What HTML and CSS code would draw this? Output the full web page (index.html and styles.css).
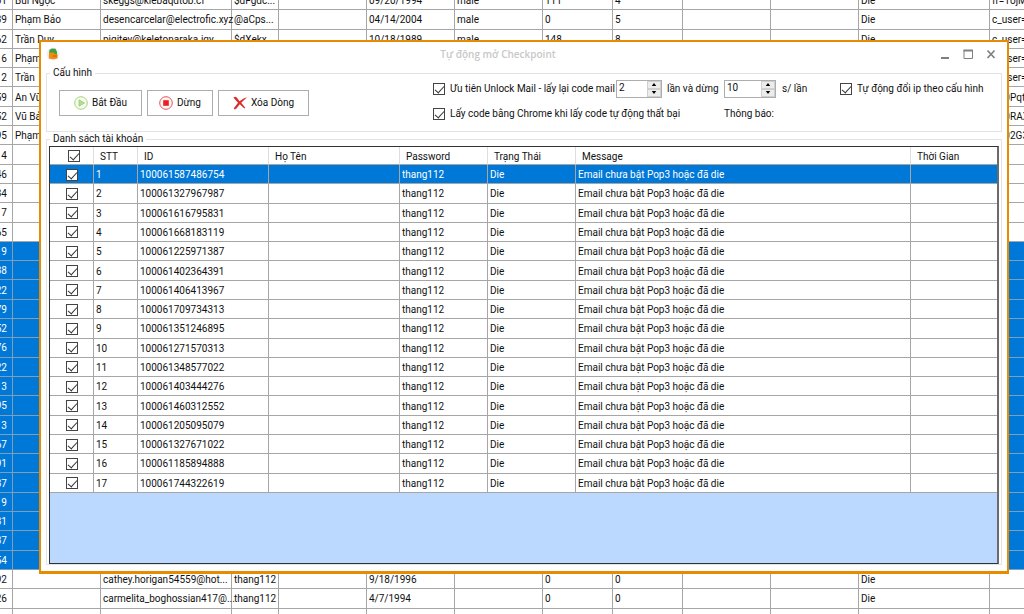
FILE: index.html
```html
<!DOCTYPE html>
<html lang="vi">
<head>
<meta charset="utf-8">
<title>Tự động mở Checkpoint</title>
<link rel="stylesheet" href="styles.css">
</head>
<body>
<div class="backdrop">
  <table class="sheet" id="sheet">
    <colgroup><col class="b-uid"><col class="b-name"><col class="b-mail"><col class="b-pass"><col class="b-col"><col class="b-col"><col class="b-col"><col class="b-num"><col class="b-num"><col class="b-col"><col class="b-col"><col class="b-state"><col></colgroup>
    <tbody></tbody>
  </table>
</div>
<main class="window">
  <header class="titlebar">
    <svg class="app-icon" viewBox="0 0 14 14"><circle cx="7" cy="7" r="6.5" fill="#edf1f2"/><path d="M3 6 3.5 2.8 6 1.5 9.5 1.8 11 5V7H3z" fill="#3fa142"/><path d="M3 5.5h4.5L9 7h2.5v4.5L7 12.3 2.8 11.500z" fill="#f28c0f"/><path d="M7 8h4v2H7z" fill="#d9760b"/></svg>
    <h1 class="title">Tự động mở Checkpoint</h1>
    <div class="win-buttons">
      <button class="win-button" aria-label="Thu nhỏ"><svg viewBox="0 0 12 12"><path d="M2 10h8" stroke="#808080" stroke-width="2"/></svg></button>
      <button class="win-button" aria-label="Phóng to"><svg viewBox="0 0 12 12"><path d="M2 2v8.500h8.500V2" fill="none" stroke="#808080"/><path d="M1.500 2.500h9.500" stroke="#808080" stroke-width="2"/></svg></button>
      <button class="win-button" aria-label="Đóng"><svg viewBox="0 0 12 12"><path d="M2.500 2.500 9.500 10M9.500 2.500 2.500 10" stroke="#808080" stroke-width="1.700"/></svg></button>
    </div>
  </header>
  <fieldset class="group config">
    <legend>Cấu hình</legend>
    <div class="config-body">
      <div class="actions">
        <button class="action start"><svg class="icon" viewBox="0 0 14 14"><circle cx="7" cy="7" r="6.300" fill="#f7fcf0" stroke="#a3d47c"/><path d="M5 3.800v6.400L10.500 7z" fill="#b5df90" stroke="#8fca62" stroke-width=".7"/></svg>Bắt Đầu</button>
        <button class="action stop"><svg class="icon" viewBox="0 0 14 14"><circle cx="7" cy="7" r="6.300" fill="#fff5f5" stroke="#e65358"/><path d="M4.200 4.200h5.600v5.600H4.200z" fill="#ee1c20"/></svg>Dừng</button>
        <button class="action remove"><svg class="icon" viewBox="0 0 14 14"><path d="M.3 1.500 2.500.8 4 1.800 6.500 5.300 11 2.200 14 1.300 8.200 6.800 12.300 11.800 11.300 12.500 6.800 8.300 3.200 12.800 1.600 13.400.8 12.200 5 6.800z" fill="#dc2b2b"/></svg>Xóa Dòng</button>
      </div>
      <div class="options">
        <label class="check opt-mail"><input type="checkbox" checked>Ưu tiên Unlock Mail - lấy lại code mail</label>
        <div class="spin spin-short"><input type="number" value="2" aria-label="Số lần"><div class="steps"><button aria-label="Tăng"><svg viewBox="0 0 8 4"><path d="M1 4 4 0l3 4z"/></svg></button><button aria-label="Giảm"><svg viewBox="0 0 8 4"><path d="M1 0l3 4 3-4z"/></svg></button></div></div>
        <span>lần và dừng</span>
        <div class="spin"><input type="number" value="10" aria-label="Số giây"><div class="steps"><button aria-label="Tăng"><svg viewBox="0 0 8 4"><path d="M1 4 4 0l3 4z"/></svg></button><button aria-label="Giảm"><svg viewBox="0 0 8 4"><path d="M1 0l3 4 3-4z"/></svg></button></div></div>
        <span>s/ lần</span>
        <label class="check"><input type="checkbox" checked>Tự động đổi ip theo cấu hình</label>
        <label class="check opt-chrome"><input type="checkbox" checked>Lấy code bằng Chrome khi lấy code tự động thất bại</label>
        <span class="notice">Thông báo:</span>
      </div>
    </div>
  </fieldset>
  <fieldset class="group accounts">
    <legend>Danh sách tài khoản</legend>
    <div class="grid-view">
      <table class="grid" id="accounts">
        <colgroup><col class="c-small"><col class="c-small"><col class="c-id"><col class="c-id"><col class="c-pass"><col class="c-pass"><col><col class="c-time"></colgroup>
        <thead><tr><th class="pick"><input type="checkbox" checked aria-label="Chọn tất cả"></th><th>STT</th><th>ID</th><th>Họ Tên</th><th>Password</th><th>Trạng Thái</th><th>Message</th><th>Thời Gian</th></tr></thead>
        <tbody></tbody>
      </table>
    </div>
  </fieldset>
</main>
<script src="app.js"></script>
</body>
</html>
```
FILE: styles.css
```css
* { box-sizing: border-box; }
body {
  margin: 0;
  height: 100vh;
  overflow: hidden;
  background: #fff;
  color: #111;
  font: 10px/14px Roboto, "Liberation Sans", Arial, sans-serif;
}
button, input { font: inherit; color: inherit; margin: 0; }
table { border-collapse: separate; border-spacing: 0; table-layout: fixed; }
th, td { padding: 2px 0 0 2px; text-align: left; font-weight: normal; white-space: nowrap; border: solid #a6a6a6; border-width: 0 1px 1px 0; }

/* spreadsheet behind the dialog */
.backdrop { height: 100vh; overflow: hidden; }
.sheet { width: calc(100% + 60px); height: calc(100vh + 23px); margin: -9px 0 0 -20px; }
.sheet td:first-child { text-align: right; padding: 2px 5px 0 0; }
.sheet .selected td { background: #0078d7; color: #fff; border-color: #7f9fb8; }
.b-uid { width: 33px; }
.b-name { width: 88px; }
.b-mail { width: 131px; }
.b-pass { width: 47px; }
.b-col { width: 88px; }
.b-num { width: 70px; }
.b-state { width: 131px; }

/* dialog */
.window {
  position: absolute;
  inset: 40px 15px 40px 39px;
  display: flex;
  flex-direction: column;
  padding: 0 5px 6px;
  background: #fff;
  border: 2px solid #e98b00;
  border-bottom-width: 3px;
}
.titlebar { display: grid; grid-template-columns: 80px 1fr 80px; align-items: center; height: 24px; }
.app-icon { width: 14px; height: 14px; }
.title { margin: 0; padding-right: 52px; text-align: center; font: 600 10px/14px "Open Sans", "Noto Sans", sans-serif; color: #c8c8c8; }
.win-buttons { display: flex; justify-content: flex-end; gap: 11px; padding-right: 5px; }
.win-button { width: 12px; height: 12px; padding: 0; border: 0; background: none; }
.win-button svg { display: block; width: 12px; height: 12px; }

.group { min-width: 0; margin: 0; padding: 0; border: 1px solid #e3e3e3; }
.group legend { margin-left: 3px; padding: 0 3px; line-height: 14px; }
.config { height: 66px; }
.config-body { display: flex; gap: 124px; padding-left: 12px; }
.actions { display: flex; gap: 5px; padding-top: 10px; }
.action { display: flex; align-items: center; justify-content: center; gap: 4px; height: 26px; padding: 0; background: #fff; border: 1px solid #adadad; white-space: nowrap; }
.start { width: 83px; }
.stop { width: 66px; }
.remove { width: 91px; }
.icon { width: 14px; height: 14px; }
.options { flex: 1; display: grid; grid-template-columns: 183px 51px 57px 58px 58px 1fr; grid-template-rows: 17px 33px; align-items: center; white-space: nowrap; }
.check { display: flex; align-items: center; gap: 5px; }
.opt-chrome { grid-column: span 3; }
input[type="checkbox"] { appearance: none; display: block; flex: none; width: 12px; height: 12px; background: #fff; border: 1px solid #444; }
input[type="checkbox"]::before { content: ""; display: block; width: 4px; height: 8px; margin: 0 0 0 3px; border: solid #333; border-width: 0 1px 1px 0; transform: rotate(42deg); }
.spin { display: flex; width: 52px; height: 18px; border: 1px solid #adadad; background: #fff; }
.spin-short { width: 46px; }
.spin input { flex: 1; min-width: 0; padding: 0 0 2px 2px; border: 0; background: none; appearance: textfield; }
.spin input::-webkit-inner-spin-button { display: none; }
.steps { display: flex; flex-direction: column; width: 14px; }
.steps button { flex: 1; display: flex; align-items: center; justify-content: center; padding: 0; background: #ececec; border: 1px solid #cfcfcf; }
.steps svg { display: block; width: 6px; height: 3px; }

.accounts { flex: 1; display: flex; flex-direction: column; }
.grid-view { height: 418px; margin: 0 2px; background: #bbd8ff; border: 1px solid #333; border-right: 2px solid #6b6b6b; }
.grid { width: 100%; height: calc(100% - 70px); background: #fff; }
.grid th { height: 18px; padding-left: 6px; border-right-color: #dedede; }
.c-small { width: 44px; }
.c-id { width: 131px; }
.c-pass { width: 88px; }
.c-time { width: 86px; }
.grid td:last-child, .grid th:last-child { border-right-width: 0; }
.grid td:first-child { padding: 1px 0 0; }
.grid td:first-child input { margin: 0 auto; }
.grid th.pick { padding-top: 0; }
.grid th.pick input { margin-left: 12px; }
.grid .selected td { background: #0078d7; color: #fff; }
```
FILE: app.js
```js
const ids = ["100061587486754", "100061327967987", "100061616795831", "100061668183119", "100061225971387", "100061402364391", "100061406413967", "100061709734313", "100061351246895", "100061271570313", "100061348577022", "100061403444276", "100061460312552", "100061205095079", "100061327671022", "100061185894888", "100061744322619"];
const pick = '<input type="checkbox" checked aria-label="Chọn dòng">';

function addRow(body, cells, selected) {
  const row = body.insertRow();
  if (selected) row.className = "selected";
  cells.forEach(text => { row.insertCell().innerHTML = text; });
}

const accounts = document.querySelector("#accounts tbody");
ids.forEach((id, i) => addRow(accounts, [pick, i + 1, id, "", "thang112", "Die", "Email chưa bật Pop3 hoặc đã die", ""], i === 0));

const uids = "01 39 62 16 12 59 52 95 14 46 34 17 65 19 38 22 79 52 76 22 13 95 13 67 91 37 19 31 37 54 92 26 11".split(" ");
const details = {
  0: ["Bùi Ngọc", "skeggs@klebaqdtob.cf", "$dFgdc...", "", "09/20/1994", "male", "111", "4", "", "", "Die", "fr=1ojMW"],
  1: ["Phạm Bảo", "desencarcelar@electrofic.xyz", "@aCps...", "", "04/14/2004", "male", "0", "5", "", "", "Die", "c_user="],
  2: ["Trần Duy", "pigitey@keletonaraka.jqy", "$dXekx...", "", "10/18/1989", "male", "148", "8", "", "", "Die", "c_user="],
  3: ["Phạm", "", "", "", "", "", "", "", "", "", "", "c_user="],
  4: ["Trần", "", "", "", "", "", "", "", "", "", "", "c_user="],
  5: ["An Vũ", "", "", "", "", "", "", "", "", "", "", "fr=0Pqts"],
  6: ["Vũ Bảo", "", "", "", "", "", "", "", "", "", "", "fr=0RAX"],
  7: ["Phạm", "", "", "", "", "", "", "", "", "", "", "fr=02G3"],
  30: ["", "cathey.horigan54559@hot...", "thang112", "", "9/18/1996", "", "0", "0", "", "", "Die", ""],
  31: ["", "carmelita_boghossian417@...", "thang112", "", "4/7/1994", "", "0", "0", "", "", "Die", ""],
  32: ["", "dannychase981@hotmail...", "thang112", "", "7/7/1990", "", "0", "0", "", "", "Die", ""]
};
const sheet = document.querySelector("#sheet tbody");
uids.forEach((uid, i) => addRow(sheet, [uid, ...(details[i] || Array(12).fill(""))], i >= 13 && i < 30));
```
